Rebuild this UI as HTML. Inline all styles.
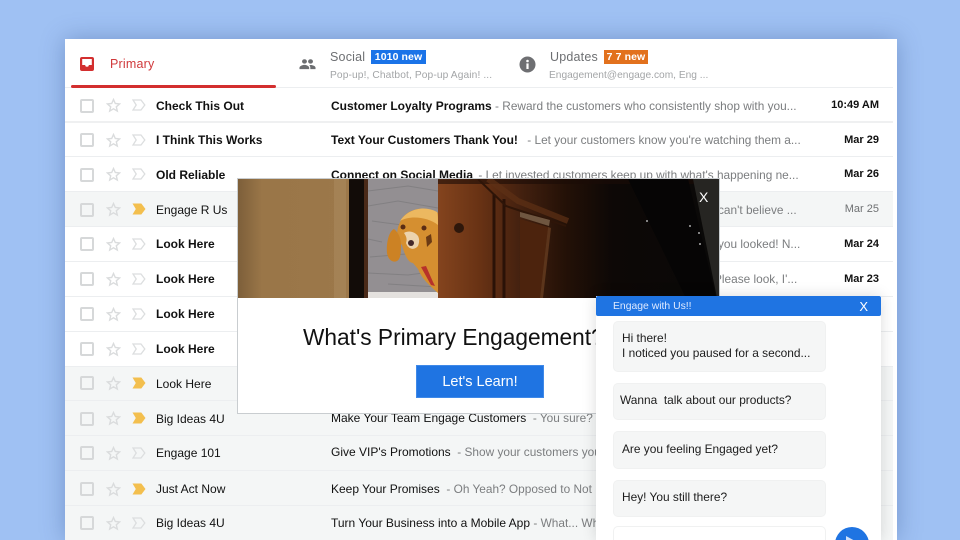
<!DOCTYPE html>
<html><head><meta charset="utf-8"><style>
html,body{margin:0;padding:0;width:960px;height:540px;overflow:hidden}
#wrap{position:relative;width:960px;height:540px;overflow:hidden;background:#9fc1f3;font-family:"Liberation Sans",sans-serif}
.a{position:absolute;white-space:nowrap}
#card{position:absolute;left:65px;top:39px;width:832px;height:501px;background:#fff;box-shadow:0 0 22px rgba(50,80,140,.38)}
.row{position:absolute;left:65px;width:828px;border-bottom:1px solid #eceef0}
.g{background:#f4f6f6}
.cb{position:absolute;left:15px;width:10px;height:10px;border:2px solid #d6d8d9;border-radius:2px}
.ic{position:absolute}
.n{position:absolute;left:91px;font-size:12px;color:#111;white-space:nowrap}
.s{position:absolute;left:266px;font-size:12px;color:#111;white-space:nowrap}
.p{color:#7b7d7f;font-weight:400;font-size:11.85px}
.d{position:absolute;right:14px;font-size:11px;color:#111;font-weight:700;white-space:nowrap}
.b{font-weight:700}
.msg{position:absolute;left:613px;width:213px;background:#f5f6f6;border:1px solid #f0f1f1;border-radius:5px;font-size:11.9px;color:#1c1c1c;box-sizing:border-box;line-height:14.6px;white-space:nowrap}
</style></head><body><div id="wrap">
<div id="card"></div>
<div class="a" style="left:65px;top:87px;width:828px;height:1px;background:#eceef0"></div>

<svg class="a" style="left:79px;top:56px" width="16" height="16" viewBox="0 0 16 16"><rect x="1" y="1" width="14" height="14" rx="2" fill="#d32f2f"/><path d="M3.2 3h9.6v6h-3a1.8 1.8 0 0 1-3.6 0h-3z" fill="#fff"/></svg>
<div class="a" style="left:110px;top:57px;font-size:12.5px;letter-spacing:.2px;color:#d0393b">Primary</div>
<div class="a" style="left:71px;top:85px;width:205px;height:3px;background:#d32f2f;border-radius:2px"></div>

<svg class="a" style="left:299px;top:58px" width="17" height="12" viewBox="0 0 18 14" preserveAspectRatio="none"><circle cx="5.8" cy="4" r="2.6" fill="#6b6d70"/><circle cx="12.2" cy="4" r="2.6" fill="#6b6d70"/><path d="M.5 13v-1.6C.5 9.4 3.5 8 5.8 8s5 1.4 5 3.4V13zM12 13v-1.8c0-1-.4-1.9-1.2-2.7.5-.2 1-.4 1.6-.4 2.2 0 5.1 1.3 5.1 3.2V13z" fill="#6b6d70"/></svg>
<div class="a" style="left:330px;top:50px;font-size:12.5px;letter-spacing:.2px;color:#6d6f72">Social</div>
<div class="a" style="left:371px;top:50px;width:55px;height:14px;background:#1a73e8;color:#fff;font-size:10.5px;font-weight:700;line-height:14px;text-align:center;letter-spacing:.1px">1010 new</div>
<div class="a" style="left:330px;top:70px;font-size:10.2px;letter-spacing:.12px;color:#a3a5a7">Pop-up!, Chatbot, Pop-up Again! ...</div>

<svg class="a" style="left:519px;top:56px" width="17" height="17" viewBox="0 0 17 17"><circle cx="8.5" cy="8.5" r="8" fill="#6e6f72"/><rect x="7.4" y="7.4" width="2.2" height="5.6" fill="#fff"/><circle cx="8.5" cy="5" r="1.3" fill="#fff"/></svg>
<div class="a" style="left:550px;top:50px;font-size:12.5px;letter-spacing:.2px;color:#6d6f72">Updates</div>
<div class="a" style="left:604px;top:50px;width:44px;height:14px;background:#e2711d;color:#fff;font-size:10.5px;font-weight:700;line-height:14px;text-align:center;letter-spacing:.1px">7 7 new</div>
<div class="a" style="left:549px;top:70px;font-size:10.2px;color:#a3a5a7">Engagement@engage.com, Eng ...</div>

<div class="row" style="top:88px;height:33px;border-bottom:2px solid #eff0f1"><div class="cb" style="top:11px"></div><svg class="ic" style="left:41px;top:10px" width="15" height="15" viewBox="0 0 15 15"><use href="#st"/></svg><svg class="ic" style="left:67px;top:11px" width="14" height="12" viewBox="0 0 14 12"><use href="#le"/></svg><div class="n b" style="top:11px">Check This Out</div><div class="s b" style="top:11px">Customer Loyalty Programs <span class="p">- Reward the customers who consistently shop with you...</span></div><div class="d" style="top:11px">10:49 AM</div></div>
<div class="row" style="top:123px;height:33px"><div class="cb" style="top:10px"></div><svg class="ic" style="left:41px;top:10px" width="15" height="15" viewBox="0 0 15 15"><use href="#st"/></svg><svg class="ic" style="left:67px;top:11px" width="14" height="12" viewBox="0 0 14 12"><use href="#le"/></svg><div class="n b" style="top:10px">I Think This Works</div><div class="s b" style="top:10px">Text Your Customers Thank You! <span class="p" style="margin-left:6px">- Let your customers know you're watching them a...</span></div><div class="d" style="top:11px">Mar 29</div></div>
<div class="row" style="top:157px;height:34px"><div class="cb" style="top:11px"></div><svg class="ic" style="left:41px;top:10px" width="15" height="15" viewBox="0 0 15 15"><use href="#st"/></svg><svg class="ic" style="left:67px;top:11px" width="14" height="12" viewBox="0 0 14 12"><use href="#le"/></svg><div class="n b" style="top:11px">Old Reliable</div><div class="s b" style="top:11px">Connect on Social Media <span class="p" style="margin-left:2px">- Let invested customers keep up with what's happening ne...</span></div><div class="d" style="top:11px">Mar 26</div></div>
<div class="row g" style="top:192px;height:34px"><div class="cb" style="top:11px"></div><svg class="ic" style="left:41px;top:10px" width="15" height="15" viewBox="0 0 15 15"><use href="#st"/></svg><svg class="ic" style="left:67px;top:11px" width="14" height="12" viewBox="0 0 14 12"><use href="#lf"/></svg><div class="n" style="top:11px">Engage R Us</div><div class="s" style="top:11px;left:653px"><span class="p">can't believe ...</span></div><div class="d" style="top:11px;font-weight:400;color:#6f7173">Mar 25</div></div>
<div class="row" style="top:227px;height:34px"><div class="cb" style="top:10px"></div><svg class="ic" style="left:41px;top:10px" width="15" height="15" viewBox="0 0 15 15"><use href="#st"/></svg><svg class="ic" style="left:67px;top:11px" width="14" height="12" viewBox="0 0 14 12"><use href="#le"/></svg><div class="n b" style="top:10px">Look Here</div><div class="s" style="top:10px;left:653px"><span class="p">you looked! N...</span></div><div class="d" style="top:11px">Mar 24</div></div>
<div class="row" style="top:262px;height:34px"><div class="cb" style="top:10px"></div><svg class="ic" style="left:41px;top:10px" width="15" height="15" viewBox="0 0 15 15"><use href="#st"/></svg><svg class="ic" style="left:67px;top:11px" width="14" height="12" viewBox="0 0 14 12"><use href="#le"/></svg><div class="n b" style="top:10px">Look Here</div><div class="s" style="top:10px;left:649px"><span class="p">Please look, I'...</span></div><div class="d" style="top:11px">Mar 23</div></div>
<div class="row" style="top:297px;height:34px"><div class="cb" style="top:10px"></div><svg class="ic" style="left:41px;top:10px" width="15" height="15" viewBox="0 0 15 15"><use href="#st"/></svg><svg class="ic" style="left:67px;top:11px" width="14" height="12" viewBox="0 0 14 12"><use href="#le"/></svg><div class="n b" style="top:10px">Look Here</div></div>
<div class="row" style="top:332px;height:34px"><div class="cb" style="top:10px"></div><svg class="ic" style="left:41px;top:10px" width="15" height="15" viewBox="0 0 15 15"><use href="#st"/></svg><svg class="ic" style="left:67px;top:11px" width="14" height="12" viewBox="0 0 14 12"><use href="#le"/></svg><div class="n b" style="top:10px">Look Here</div></div>
<div class="row g" style="top:367px;height:33px"><div class="cb" style="top:9px"></div><svg class="ic" style="left:41px;top:9px" width="15" height="15" viewBox="0 0 15 15"><use href="#st"/></svg><svg class="ic" style="left:67px;top:10px" width="14" height="12" viewBox="0 0 14 12"><use href="#lf"/></svg><div class="n" style="top:10px">Look Here</div></div>
<div class="row g" style="top:401px;height:34px"><div class="cb" style="top:11px"></div><svg class="ic" style="left:41px;top:10px" width="15" height="15" viewBox="0 0 15 15"><use href="#st"/></svg><svg class="ic" style="left:67px;top:11px" width="14" height="12" viewBox="0 0 14 12"><use href="#lf"/></svg><div class="n" style="top:11px">Big Ideas 4U</div><div class="s" style="top:10px">Make Your Team Engage Customers <span class="p">&nbsp;- You sure?</span></div></div>
<div class="row g" style="top:436px;height:34px"><div class="cb" style="top:10px"></div><svg class="ic" style="left:41px;top:10px" width="15" height="15" viewBox="0 0 15 15"><use href="#st"/></svg><svg class="ic" style="left:67px;top:11px" width="14" height="12" viewBox="0 0 14 12"><use href="#le"/></svg><div class="n" style="top:10px">Engage 101</div><div class="s" style="top:9px">Give VIP's Promotions <span class="p">&nbsp;- Show your customers your</span></div></div>
<div class="row g" style="top:471px;height:34px"><div class="cb" style="top:11px"></div><svg class="ic" style="left:41px;top:11px" width="15" height="15" viewBox="0 0 15 15"><use href="#st"/></svg><svg class="ic" style="left:67px;top:12px" width="14" height="12" viewBox="0 0 14 12"><use href="#lf"/></svg><div class="n" style="top:11px">Just Act Now</div><div class="s" style="top:11px">Keep Your Promises <span class="p">&nbsp;- Oh Yeah? Opposed to Not</span></div></div>
<div class="row g" style="top:506px;height:34px;border:0"><div class="cb" style="top:10px"></div><svg class="ic" style="left:41px;top:10px" width="15" height="15" viewBox="0 0 15 15"><use href="#st"/></svg><svg class="ic" style="left:67px;top:11px" width="14" height="12" viewBox="0 0 14 12"><use href="#le"/></svg><div class="n" style="top:10px">Big Ideas 4U</div><div class="s" style="top:10px">Turn Your Business into a Mobile App <span class="p">- What... Wh</span></div></div>

<svg width="0" height="0" style="position:absolute"><defs>
<path id="st" d="M7.5 1.5l1.8 4 4.3.4-3.3 2.9 1 4.3-3.8-2.3-3.8 2.3 1-4.3L1.4 5.9l4.3-.4z" fill="none" stroke="#dadcdd" stroke-width="1.4"/>
<path id="le" d="M1 1h8l3.8 5L9 11H1l3.2-5z" fill="none" stroke="#dcdedf" stroke-width="1.3"/>
<path id="lf" d="M.5 .5h8.8l4.2 5.5-4.2 5.5H.5L3.8 6z" fill="#f3bf4e"/>
</defs></svg>

<!-- popup -->
<div class="a" style="left:238px;top:179px;width:481px;height:234px;background:#fff;box-shadow:0 0 0 1px #c9cdd0"></div>
<svg class="a" style="left:238px;top:179px" width="481" height="120" viewBox="0 0 481 120">
<defs>
<linearGradient id="w" x1="0" x2="1"><stop offset="0" stop-color="#7d5f3a"/><stop offset=".05" stop-color="#9a7648"/><stop offset=".7" stop-color="#a07c4e"/><stop offset="1" stop-color="#94744c"/></linearGradient>
<linearGradient id="dk" x1="0" x2="1"><stop offset="0" stop-color="#84441e"/><stop offset=".15" stop-color="#683214"/><stop offset=".3" stop-color="#42200f"/><stop offset=".45" stop-color="#241107"/><stop offset=".62" stop-color="#0d0806"/><stop offset="1" stop-color="#0a0908"/></linearGradient>
</defs>
<rect width="481" height="119" fill="url(#w)"/>
<rect x="96" width="12" height="119" fill="#ab8a5e" opacity=".55"/>
<rect x="111" width="19" height="119" fill="#120c08"/>
<rect x="126" width="4" height="119" fill="#4a2a18"/>
<rect x="130" width="70" height="119" fill="#938f92"/>
<g stroke="#7b797c" stroke-width="1" fill="none" opacity=".7"><path d="M130 12l40-5 30 5M130 27l30-5 40 7M134 42l30 4M130 60l14 3M132 78l36-3M130 94l40 2 30-4M150 105l50 3"/></g>
<rect x="130" y="113" width="70" height="6" fill="#e4e1de"/>
<path d="M200 114C191 106 184 100 180 90L175 84C169 84 165 70 164 66 157 60 158 48 165 38 172 30 186 26 200 34z" fill="#d58f30"/>
<path d="M162 42C170 30 186 26 199 33 200 36 200 40 200 46 190 38 172 36 162 42z" fill="#ecb860"/>
<path d="M156 50c-5 2-8 14-7 24 1 7 6 10 10 8 4-2 4-10 4-16 0-6-2-12-7-16z" fill="#cc8224"/>
<path d="M166 54c3 4 3 7 2 10 2 6 8 8 12 3 2-5 1-8 0-10-3-4-9-6-14-3z" fill="#ecd3ad"/>
<circle cx="173" cy="64" r="3" fill="#44292a"/>
<circle cx="165" cy="48" r="2.5" fill="#5a2c14"/><circle cx="186" cy="49" r="2.5" fill="#5a2c14"/>
<path d="M188 58l5-3 1 8-5 5z" fill="#6b3a14"/>
<path d="M183 88l5-1 7 16 2 4-4-1z" fill="#b7322a"/>
<rect x="200" width="281" height="119" fill="url(#dk)"/>
<rect x="200" width="281" height="5" fill="#1a0c06" opacity=".6"/>
<circle cx="221" cy="49" r="5" fill="#2e170b"/>
<g fill="none" stroke="#2a1207" stroke-width="3"><path d="M256 15v104M266 20v99"/></g>
<path d="M240 0l28 27 60 20" fill="none" stroke="#2e1508" stroke-width="2"/>
<path d="M250 0l30 22 50 20" fill="none" stroke="#5e3015" stroke-width="6" opacity=".7"/>
<path d="M282 33l30 8-1 6-29-9z" fill="#6f5640"/>
<path d="M282 40l28 8-8 71h-20z" fill="#4c230d"/>
<path d="M310 48l3 1-8 70h-3z" fill="#6e4122" opacity=".7"/>
<path d="M390 0h60l28 119h-30z" fill="#060505"/>
<path d="M455 0h26v119h-2z" fill="#262522"/>
<g fill="#aaa"><circle cx="409" cy="42" r="1"/><circle cx="452" cy="47" r="1"/><circle cx="461" cy="54" r="1"/><circle cx="462" cy="65" r="1"/></g>
</svg>
<div class="a" style="left:699px;top:189px;font-size:14px;color:#fff;line-height:16px">X</div>
<div class="a" style="left:303px;top:323px;font-size:22.7px;color:#111;line-height:28px">What's Primary Engagement?</div>
<div class="a" style="left:416px;top:365px;width:128px;height:33px;background:#1f74e2;box-shadow:inset 0 0 0 1px #3f89e8;color:#fff;font-size:14.5px;line-height:34px;text-align:center">Let's Learn!</div>

<!-- chat -->
<div class="a" style="left:596px;top:296px;width:285px;height:244px;background:#fff;box-shadow:0 0 14px rgba(0,0,0,.14)"></div>
<div class="a" style="left:596px;top:296px;width:285px;height:20px;background:#1f74e2;border-radius:2px;color:#dfeaff;font-size:10.4px;line-height:21px;text-indent:17px">Engage with Us!!<span style="position:absolute;right:13px;top:0;font-size:13px;color:#fff;text-indent:0">X</span></div>
<div class="msg" style="top:321px;height:51px;padding:9px 8px">Hi there!<br>I noticed you paused for a second...</div>
<div class="msg" style="top:383px;height:37px;padding:9px 6px">Wanna&nbsp; talk about our products?</div>
<div class="msg" style="top:431px;height:38px;padding:10px 8px">Are you feeling Engaged yet?</div>
<div class="msg" style="top:480px;height:37px;padding:9px 8px">Hey! You still there?</div>
<div class="msg" style="top:526px;height:30px;background:#fff"></div>
<div class="a" style="left:835px;top:527px;width:34px;height:34px;border-radius:50%;background:#1f74e2"></div>
<svg class="a" style="left:845px;top:536px" width="14" height="6" viewBox="0 0 14 6"><path d="M1 0l11 6H1z" fill="#cfe0fa"/></svg>
</div></body></html>
